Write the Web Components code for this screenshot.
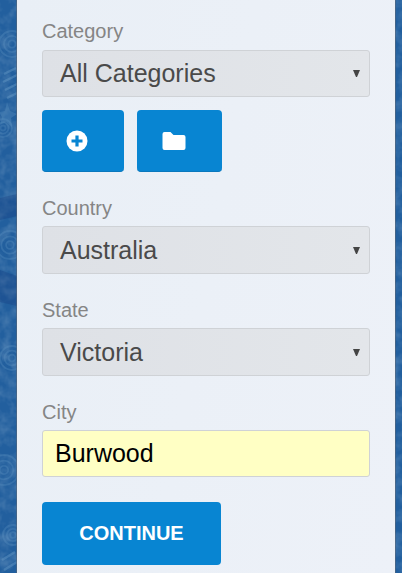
<!DOCTYPE html>
<html><head><meta charset="utf-8"><title>Form</title>
<style>
html,body{margin:0;height:573px;overflow:hidden}
body{font-family:"Liberation Sans",Arial,sans-serif;background:#225f9e}
</style></head><body>
<pattern-page>
<form-panel>
  <form-field label="Category" kind="select" value="All Categories" gap="7"></form-field>
  <icon-row></icon-row>
  <form-field label="Country" kind="select" value="Australia" tall></form-field>
  <form-field label="State" kind="select" value="Victoria" tall></form-field>
  <form-field label="City" kind="input" value="Burwood"></form-field>
  <action-button>CONTINUE</action-button>
</form-panel>
</pattern-page>
<script>
function el(name,html){customElements.define(name,class extends HTMLElement{connectedCallback(){if(this.shadowRoot)return;this.attachShadow({mode:'open'}).innerHTML=typeof html==='function'?html(this):html;}});}
const sw=(x,y,r)=>`<g fill="none" stroke="#5f95c4" stroke-opacity=".3" stroke-width="1.8"><circle cx="${x}" cy="${y}" r="${r}"/><circle cx="${x}" cy="${y}" r="${r*.62}"/><circle cx="${x}" cy="${y}" r="${r*.28}"/></g>`;
el('pattern-page',`<style>
:host{display:block;height:573px;box-sizing:border-box;padding:0 7px 0 17px;position:relative;overflow:hidden;background:#225f9e}
svg{position:absolute;inset:0;width:402px;height:573px}
::slotted(*){position:relative}
</style><svg viewBox="0 0 402 573" aria-hidden="true">
<defs><filter id="n"><feTurbulence type="fractalNoise" baseFrequency=".09" numOctaves="3" seed="4"/><feColorMatrix values="0 0 0 0 .08 0 0 0 0 .22 0 0 0 0 .45 0 0 0 1.5 -.55"/></filter></defs>
<rect width="402" height="573" filter="url(#n)"/>
${sw(12,44,13)}${sw(3,128,9)}${sw(10,245,14)}${sw(12,358,12)}${sw(4,470,15)}${sw(13,535,10)}
<g stroke="#6d9fca" stroke-opacity=".4" stroke-width="2.5"><path d="M4 74l12-6M3 82l14-7M5 90l12-6M7 98l10-5"/><path d="M2 560l13-8M4 570l13-8"/></g>
<path d="M7 102l3 9 7 3-6 4 1 9-6-5-6 3 2-8-3-5 6-1Z" fill="#5f95c4" fill-opacity=".35"/>
<path d="M0 198l17-4v22l-17 4ZM0 270l17 6v30l-17-4Z" fill="#183f80" fill-opacity=".35"/>
</svg><slot></slot>`);
el('form-panel',`<style>
:host{display:block;height:573px;box-sizing:border-box;padding:19px 25px 0;background:linear-gradient(100deg,#e9eff6,#edf1f8);box-shadow:0 0 0 1px rgba(90,100,115,.55)}
</style><slot></slot>`);
el('form-field',h=>{
 const sel=h.getAttribute('kind')==='select',tall=h.hasAttribute('tall');
 return `<style>
:host{display:block;margin-bottom:${tall?24:13}px}
label{display:block;font-size:20px;line-height:24px;color:#858585;margin-bottom:${h.getAttribute('gap')||6}px}
.box{box-sizing:border-box;height:${tall?48:47}px;display:flex;align-items:center;justify-content:space-between;border:1px solid #cfd2d6;border-radius:3px;
 background:${sel?'linear-gradient(90deg,#dee1e6,#e3e6ea)':'#ffffc4'};color:${sel?'#4a4a4a':'#000'};font-size:25px;padding:0 ${sel?'9px':'0'} 0 ${sel?'17px':'12px'}}
svg{width:7px;height:7px;display:block}
</style><label>${h.getAttribute('label')}</label><div class="box"><span>${h.getAttribute('value')}</span>${sel?'<svg viewBox="0 0 7 7"><path d="M0 0H7L4 7H3Z" fill="#444"/></svg>':''}</div>`;
});
el('icon-row',`<style>
:host{display:flex;gap:13px;margin-bottom:24px}
.b{height:62px;display:flex;align-items:center;justify-content:center;background:#0885d2;border-radius:4px;box-sizing:border-box;border-bottom:1px solid #0a78bd}
.a{width:82px;padding-right:13px}.c{width:85px;padding-right:12px}
</style><div class="b a"><svg width="22" height="22" viewBox="0 0 22 22"><circle cx="11" cy="11" r="10.5" fill="#fff"/><path d="M11 5.500v11M5.500 11h11" stroke="#0885d2" stroke-width="3.200"/></svg></div>
<div class="b c"><svg width="24" height="20" viewBox="0 0 24 20"><path d="M2.500 1H8.500l3 3H21.500A2 2 0 0 1 23.500 6V17A2 2 0 0 1 21.500 19H2.500A2 2 0 0 1 .5 17V3A2 2 0 0 1 2.500 1Z" fill="#fff"/></svg></div>`);
el('action-button',`<style>
:host{display:flex;align-items:center;justify-content:center;width:179px;height:63px;margin-top:25px;background:#0885d2;color:#fff;font-weight:700;font-size:20px;border-radius:4px}
</style><slot></slot>`);
</script></body></html>
